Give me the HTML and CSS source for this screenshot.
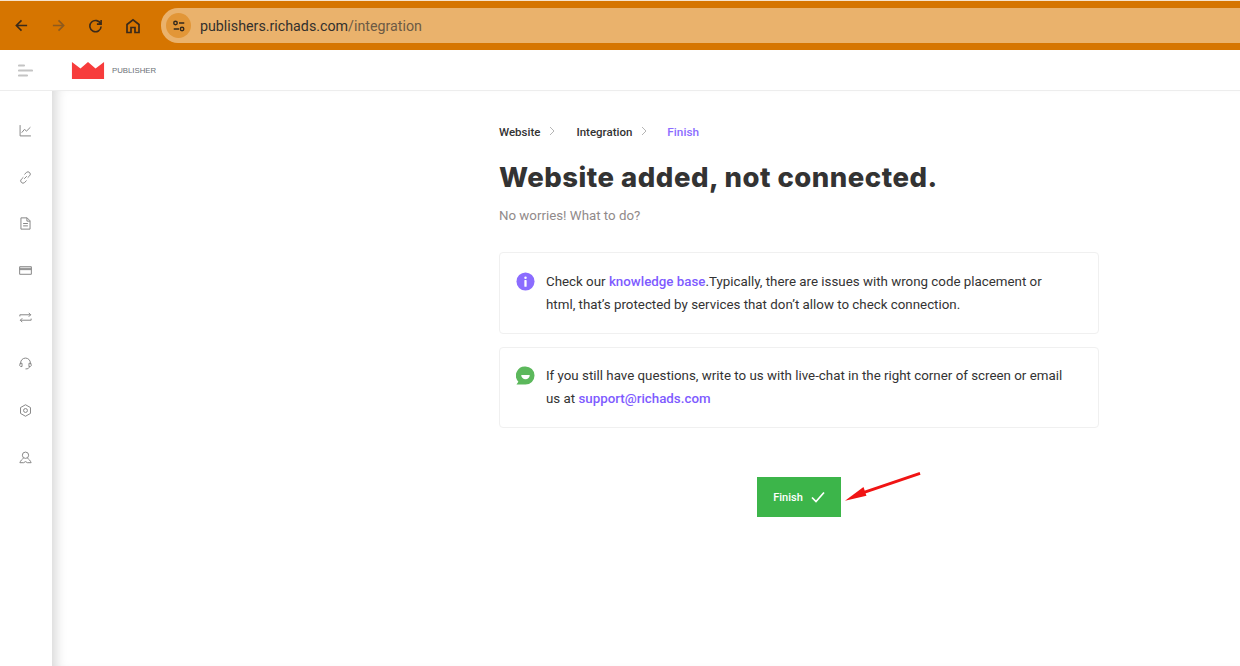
FILE: index.html
```html
<!DOCTYPE html>
<html lang="en">
<head>
<meta charset="utf-8">
<title>Integration</title>
<link rel="stylesheet" href="styles.css">
</head>
<body>
<div class="browser">
  <svg class="nav-ico first" viewBox="0 0 16 16"><path d="M14 8H2.500M8 2.500 2.500 8 8 13.500"/></svg>
  <svg class="nav-ico dim" viewBox="0 0 16 16"><path d="M2 8h11.500M8 2.500 13.500 8 8 13.500"/></svg>
  <svg class="nav-ico" viewBox="0 0 16 16"><path d="M13.600 6.500A6 6 0 1 0 14 9M14 2v4.500h-4.500"/></svg>
  <svg class="nav-ico home" viewBox="0 0 16 16"><path d="M2 14.500V6.500L8 1.800l6 4.700v8h-4V9.500H6v5z"/></svg>
  <div class="address">
    <span class="tune"><svg viewBox="0 0 16 16"><circle cx="4" cy="4.500" r="2"/><path d="M8 4.500h6M2 11.500h6"/><circle cx="11.500" cy="11.500" r="2"/></svg></span>
    <span class="url">publishers.richads.com<span class="url-path">/integration</span></span>
  </div>
</div>
<header class="topbar">
  <svg class="burger" viewBox="0 0 15 13"><path d="M1 1.500h5M1 6.500h13M1 11.500h8"/></svg>
  <svg class="crown" viewBox="0 0 34 18"><path d="M0 0 9 7 17 0l8 7 9-7v18H0z"/></svg>
  <span class="brand">PUBLISHER</span>
</header>
<div class="body">
  <nav class="side">
    <svg viewBox="0 0 12 12"><path d="M1 1v10h10M2.500 8 5 5l2 1.500L10.500 3"/></svg>
    <svg viewBox="0 0 12 12"><path d="M4.800 7.200 7.200 4.800M4 5.800 2.200 7.600a2.100 2.100 0 0 0 3 3L7 8.800M8 6.200l1.800-1.800a2.100 2.100 0 0 0-3-3L5 3.200"/></svg>
    <svg viewBox="0 0 12 12"><path d="M1.800.8h5.700l2.700 2.700v7.700H1.800zM7.300.8v3h2.900M3.800 6h4.400M3.800 8.200h4.400"/></svg>
    <svg viewBox="0 0 12 12"><path d="M.6 2.500h10.800v7H.6zM.6 4h10.800M.6 5.200h10.800"/></svg>
    <svg viewBox="0 0 12 12"><path d="M.8 5V3.500h10M9 1.700l1.800 1.800L9 5.300M11.200 7v1.500h-10M3 10.300 1.200 8.500 3 6.700"/></svg>
    <svg viewBox="0 0 12 12"><path d="M1.500 6.500V5.500a4.500 4.500 0 0 1 9 0v1M1 5.800h1.800v3H1.500L.7 8zM11 5.800H9.200v3h1.300l.8-.8zM9.500 8.800c0 1.700-1.200 2.200-3.500 2.200"/></svg>
    <svg viewBox="0 0 12 12"><path d="M6 .7 10.600 3.300v5.400L6 11.300 1.400 8.700V3.300z"/><circle cx="6" cy="6" r="1.800"/></svg>
    <svg viewBox="0 0 12 12"><circle cx="6" cy="3.900" r="2.900"/><path d="M4.300 6.600C2.800 7.500 1.400 9 .8 10.800h3.400L6 9.800l1.800 1h3.400C10.600 9 9.200 7.500 7.700 6.600"/></svg>
  </nav>
  <main class="main">
    <section class="content">
      <div class="crumbs">
        <span>Website</span><svg class="chev" viewBox="0 0 6 10"><path d="M1 1l4 4-4 4"/></svg>
        <span>Integration</span><svg class="chev last" viewBox="0 0 6 10"><path d="M1 1l4 4-4 4"/></svg>
        <span class="current">Finish</span>
      </div>
      <h1>Website added, not connected.</h1>
      <p class="sub">No worries! What to do?</p>
      <div class="card first-card">
        <svg class="badge" viewBox="0 0 20 20"><circle cx="10" cy="10" r="9.500" fill="#8b6cff"/><circle cx="10" cy="6" r="1.300" fill="#fff"/><rect x="8.800" y="8.500" width="2.400" height="7" rx=".6" fill="#fff"/></svg>
        <p>Check our <a href="#">knowledge base</a>.Typically, there are issues with wrong code placement or html, that’s protected by services that don’t allow to check connection.</p>
      </div>
      <div class="card second-card">
        <svg class="badge" viewBox="0 0 20 20"><path d="M10 .5a9.500 9.500 0 0 1 0 19H.5l2-3A9.500 9.500 0 0 1 10 .5z" fill="#5cb85c"/><path d="M5.500 9.500h9a4.500 4.500 0 0 1-9 0z" fill="#fff"/></svg>
        <p>If you still have questions, write to us with live-chat in the right corner of screen or email us at <a href="#">support@richads.com</a></p>
      </div>
      <div class="actions">
        <a class="finish" href="#">Finish<svg viewBox="0 0 14 12"><path d="M1 6.500 5 10.500 13 1.500"/></svg></a>
        <svg class="arrow" viewBox="0 0 80 32"><path d="M78 1 16 22" class="shaft"/><path d="M1 29 20 15 23 24z" class="head"/></svg>
      </div>
    </section>
  </main>
</div>
</body>
</html>
```
FILE: styles.css
```css
* { box-sizing: border-box; }
html, body { margin: 0; height: 100%; }
body { width: 1240px; height: 666px; overflow: hidden; background: #fff; font-family: Roboto, sans-serif; display: flex; flex-direction: column; }
.browser { height: 50px; flex: none; background: #d67500; border-top: 1px solid #f7e3cc; display: flex; align-items: center; padding-left: 14px; }
.nav-ico { width: 15px; height: 15px; fill: none; stroke: #3a2a1a; stroke-width: 1.700; margin-right: 22px; flex: none; }
.nav-ico.dim { stroke: #8d5a1e; }
.nav-ico.home { width: 16px; height: 16px; margin-right: 20px; }
.address { flex: 1; height: 35px; background: #eab26c; border-radius: 17px 0 0 17px; display: flex; align-items: center; padding-left: 5px; }
.tune { width: 25px; height: 25px; border-radius: 50%; background: #e29637; display: flex; align-items: center; justify-content: center; }
.tune svg { width: 14px; height: 14px; fill: none; stroke: #33281c; stroke-width: 1.600; }
.url { margin-left: 9px; font: 14.250px Roboto, sans-serif; color: #33302c; }
.url-path { color: #6d5a44; }
.topbar { height: 41px; flex: none; border-bottom: 1px solid #ededed; display: flex; align-items: center; padding-left: 18px; }
.burger { width: 15px; height: 13px; fill: none; stroke: #c4c4c4; stroke-width: 2.200; stroke-linecap: round; }
.crown { width: 34px; height: 17px; fill: #f73c3c; margin-left: 38px; }
.brand { margin-left: 7px; font: 7.800px "Liberation Sans", sans-serif; color: #6b6f76; }
.body { flex: 1; display: flex; min-height: 0; }
.side { width: 52px; flex: none; display: flex; flex-direction: column; align-items: center; padding: 33px 2px 0 0; gap: 33.700px; }
.side svg { width: 13px; height: 13px; fill: none; stroke: #858585; stroke-width: .9; }
.main { flex: 1; box-shadow: inset 12px 0 12px -8px rgba(0,0,0,.16); display: flex; }
.content { width: 600px; margin-left: 447px; padding-top: 34px; }
.crumbs { display: flex; align-items: center; font-size: 11.500px; font-weight: 500; color: #333; height: 14px; }
.chev { width: 6px; height: 10px; fill: none; stroke: #b5b5b5; stroke-width: 1; margin: -3px 21px 0 9px; }
.chev.last { margin-right: 20px; }
.current { color: #8b6cff; font-size: 11.800px; }
h1 { margin: 20px 0 0; font: 800 27.500px/36px Inter, sans-serif; letter-spacing: .5px; color: #333; }
.sub { margin: 12px 0 0; font-size: 13.300px; line-height: 18px; color: #918a8a; }
.card { display: flex; gap: 11px; margin-top: 13px; border: 1px solid #f0f0f0; border-radius: 4px; padding: 17px 30px 17px 16px; height: 82px; }
.first-card { margin-top: 27px; }
.second-card { padding-top: 16px; height: 81px; }
.badge { width: 19px; height: 19px; flex: none; margin-top: 2px; }
.card p { margin: 0; font-size: 13.330px; line-height: 23px; color: #333; }
.card a { color: #7e5bff; font-weight: 500; text-decoration: none; }
.actions { position: relative; display: flex; justify-content: center; margin-top: 49px; }
.finish { width: 84px; height: 40px; background: #3cb54a; color: #fff; font-size: 11px; font-weight: 500; text-decoration: none; display: flex; align-items: center; justify-content: center; gap: 8px; }
.finish svg { width: 14px; height: 12px; fill: none; stroke: #fff; stroke-width: 1.700; }
.arrow { position: absolute; left: 345px; top: -5px; width: 78px; height: 32px; }
.shaft { stroke: #f01414; stroke-width: 3; fill: none; }
.head { fill: #f01414; }
```
